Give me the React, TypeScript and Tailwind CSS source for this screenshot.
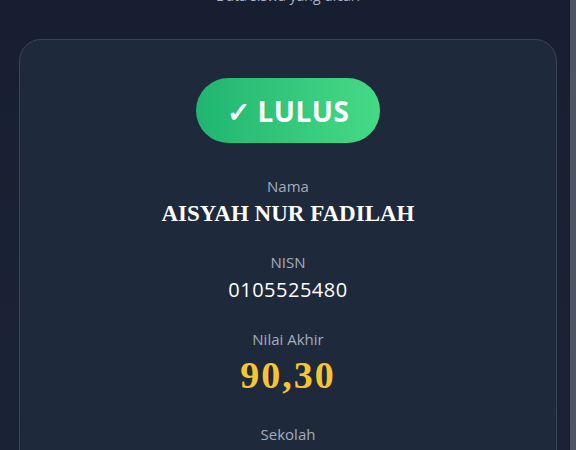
const label = "text-[15px] leading-[20px] text-[#a4adbb] font-['Open_Sans',Lato,sans-serif]";
const serif = "font-['Liberation_Serif','DejaVu_Serif',serif] font-bold";

export default function App() {
  return (
    <div className="relative h-[450px] w-[576px] overflow-hidden bg-gradient-to-b from-[#171e31] to-[#1a2335]">
      {/* Subtitle, scrolled mostly out of view */}
      <p className="mt-[-14px] h-[20px] text-center font-['Open_Sans',sans-serif] text-[14px] leading-[20px] text-[#aab3c2]">
        Data siswa yang dicari
      </p>

      {/* Result card */}
      <div className="mx-[19px] mt-[33px] rounded-[22px] border border-[#394355] bg-[#1e293b] px-6 pt-[38px] pb-10">
        <div className="flex justify-center">
          <div className="flex h-[65px] w-[184px] items-center justify-center gap-2 rounded-full bg-gradient-to-r from-[#1fb571] to-[#45da86] font-['Open_Sans',sans-serif] text-[28px] font-bold text-white">
            <span>✓</span>
            <span className="tracking-[0.5px]">LULUS</span>
          </div>
        </div>

        <div className="mt-[33px] flex flex-col items-center">
          <p className={label}>Nama</p>
          <p className={`mt-1 text-[23px] leading-[28px] text-white ${serif}`}>AISYAH NUR FADILAH</p>

          <p className={`mt-6 ${label}`}>NISN</p>
          <p className="mt-[6px] font-['Open_Sans',sans-serif] text-[20px] font-medium leading-[24px] tracking-[0.5px] text-white">
            0105525480
          </p>

          <p className={`mt-[27px] ${label}`}>Nilai Akhir</p>
          <p className={`mt-[6px] text-[38px] leading-[40px] tracking-[2px] text-[#f6c531] ${serif}`}>90,30</p>

          <p className={`mt-[29px] ${label}`}>Sekolah</p>
        </div>
      </div>

      {/* Scrollbar overlay */}
      <div className="absolute top-0 right-0 h-full w-[6px] bg-[#4d5564]" />
    </div>
  );
}
